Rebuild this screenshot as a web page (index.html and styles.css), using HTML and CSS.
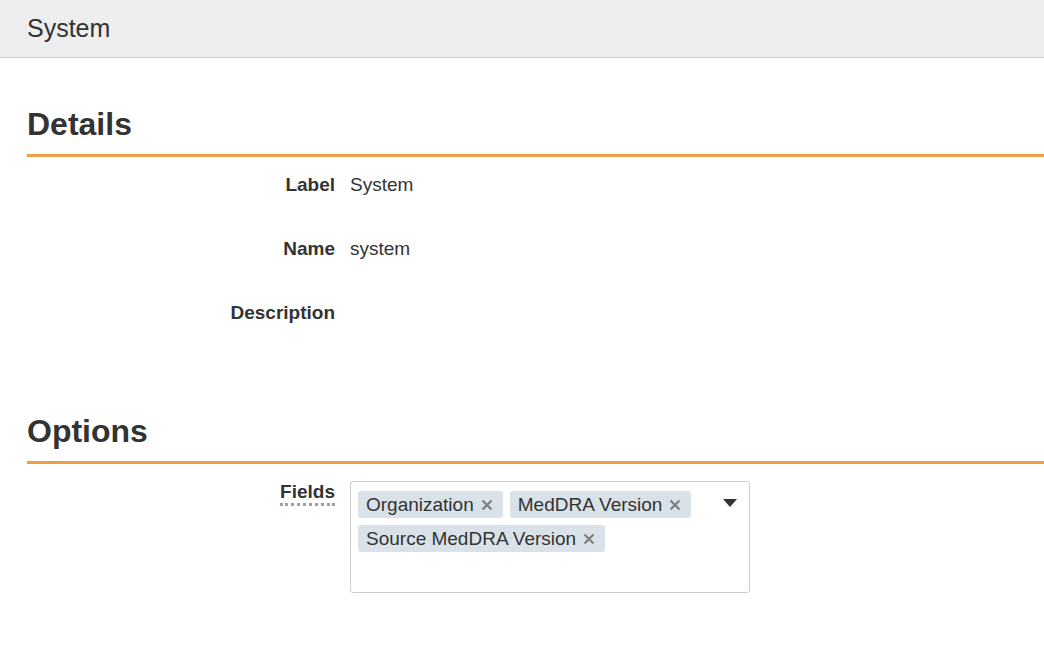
FILE: index.html
```html
<!DOCTYPE html>
<html lang="en">
<head>
<meta charset="utf-8">
<title>System</title>
<link rel="stylesheet" href="styles.css">
</head>
<body>
<header class="topbar">System</header>
<main class="content">
  <section class="section">
    <h2 class="section-title">Details</h2>
    <dl class="props">
      <div class="prop"><dt class="prop-label">Label</dt><dd class="prop-value">System</dd></div>
      <div class="prop"><dt class="prop-label">Name</dt><dd class="prop-value">system</dd></div>
      <div class="prop"><dt class="prop-label">Description</dt><dd class="prop-value"></dd></div>
    </dl>
  </section>
  <section class="section section-options">
    <h2 class="section-title">Options</h2>
    <div class="props">
      <div class="prop prop-field">
        <div class="prop-label"><span class="hint">Fields</span></div>
        <div class="prop-value">
          <div class="select">
            <div class="tags">
              <span class="tag">Organization<svg class="tag-x" viewBox="0 0 12 12" width="12" height="12"><path d="M1.5 1.5L10.5 10.5M10.5 1.5L1.5 10.5" stroke="#808080" stroke-width="2.2"/></svg></span>
              <span class="tag">MedDRA Version<svg class="tag-x" viewBox="0 0 12 12" width="12" height="12"><path d="M1.5 1.5L10.5 10.5M10.5 1.5L1.5 10.5" stroke="#808080" stroke-width="2.2"/></svg></span>
              <span class="tag">Source MedDRA Version<svg class="tag-x" viewBox="0 0 12 12" width="12" height="12"><path d="M1.5 1.5L10.5 10.5M10.5 1.5L1.5 10.5" stroke="#808080" stroke-width="2.2"/></svg></span>
            </div>
            <svg class="caret" viewBox="0 0 14 8" width="14" height="8"><path d="M0 0H14L7 8Z" fill="#333"/></svg>
          </div>
        </div>
      </div>
    </div>
  </section>
</main>
</body>
</html>
```

FILE: styles.css
```css
* { box-sizing: border-box; }
html, body {
  margin: 0;
  padding: 0;
  background: #fff;
  color: #333;
  font-family: "Liberation Sans", Arial, Helvetica, sans-serif;
}
.topbar {
  height: 58px;
  line-height: 57px;
  background: #eeeeee;
  border-bottom: 1px solid #cccccc;
  padding-left: 27px;
  font-size: 25px;
  color: #333;
}
.content {
  padding-left: 27px;
}
.section-title {
  margin: 49px 0 0 0;
  font-size: 32px;
  line-height: 35px;
  font-weight: bold;
  padding-bottom: 12px;
  border-bottom: 3px solid #f09d45;
  color: #333;
}
.section-options .section-title {
  margin-top: 89px;
}
.props {
  margin: 16px 0 0 0;
  display: flex;
  flex-direction: column;
  gap: 40px;
}
.prop {
  display: grid;
  grid-template-columns: 308px 1fr;
  column-gap: 15px;
  font-size: 19px;
  line-height: 24px;
  min-height: 24px;
}
.prop-label {
  margin: 0;
  text-align: right;
  font-weight: bold;
}
.prop-value {
  margin: 0;
}
.hint {
  padding-bottom: 1px;
  border-bottom: 3px dotted #a0a0a0;
}
.select {
  margin-top: 1px;
  width: 400px;
  height: 112px;
  border: 1px solid #cccccc;
  border-radius: 3px;
  display: flex;
  align-items: flex-start;
  padding: 9px 12px 0 7px;
}
.tags {
  flex: 1;
  display: flex;
  flex-wrap: wrap;
  gap: 7px;
  align-content: flex-start;
}
.tag {
  display: inline-flex;
  align-items: center;
  height: 27px;
  line-height: 27px;
  padding: 0 10px 0 8px;
  background: #d9e2e8;
  border-radius: 3px;
  color: #333;
  font-size: 19px;
}
.tag-x {
  margin-left: 7px;
  display: block;
}
.caret {
  margin-top: 8px;
  display: block;
}
```
